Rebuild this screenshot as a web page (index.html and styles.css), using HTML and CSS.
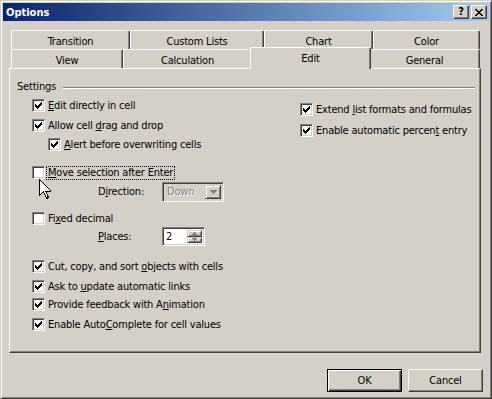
FILE: index.html
```html
<!DOCTYPE html>
<html>
<head>
<meta charset="utf-8">
<link rel="stylesheet" href="styles.css">
</head>
<body>
<div class="window">
  <div class="titlebar">
    <span class="title">Options</span>
    <div class="tbtns">
      <span class="tbtn help">?</span>
      <span class="tbtn close"><svg width="8" height="7" viewBox="0 0 8 7" shape-rendering="crispEdges"><path d="M0 0h2v1h1v1h2V1h1V0h2v1H7v1H6v1H5v1h1v1h1v1h1v1H6V6H5V5H3v1H2v1H0V6h1V5h1V4h1V3H2V2H1V1H0z" fill="#000"/></svg></span>
    </div>
  </div>
  <div class="body">
    <div class="tabs">
      <div class="tabrow">
        <div class="tab t-trans">Transition</div>
        <div class="tab t-custom">Custom Lists</div>
        <div class="tab t-chart">Chart</div>
        <div class="tab t-color">Color</div>
      </div>
      <div class="tabrow">
        <div class="tab t-view">View</div>
        <div class="tab t-calc">Calculation</div>
        <div class="tab t-edit selected">Edit</div>
        <div class="tab t-general">General</div>
      </div>
    </div>
    <div class="panel">
      <div class="section-head"><span class="section-title">Settings</span><span class="etch"></span></div>
      <div class="cols">
        <div class="left">
          <label class="row"><span class="cb checked"></span><span class="lbl"><u>E</u>dit directly in cell</span></label>
          <label class="row"><span class="cb checked"></span><span class="lbl">Allow cell <u>d</u>rag and drop</span></label>
          <label class="row indent"><span class="cb checked"></span><span class="lbl"><u>A</u>lert before overwriting cells</span></label>
          <label class="row"><span class="cb"></span><span class="lbl focus"><u>M</u>ove selection after Enter</span></label>
          <div class="row sub"><span class="sublbl">D<u>i</u>rection:</span>
            <span class="combo"><span class="combo-text">Down</span><span class="combo-btn"><svg width="7" height="4" viewBox="0 0 7 4" shape-rendering="crispEdges"><path d="M0 0h7v1H6v1H5v1H4v1H3V3H2V2H1V1H0z" fill="#808080"/></svg></span></span>
          </div>
          <label class="row"><span class="cb"></span><span class="lbl">Fi<u>x</u>ed decimal</span></label>
          <div class="row sub"><span class="sublbl"><u>P</u>laces:</span>
            <span class="spin"><span class="spin-text">2</span><span class="spin-btns"><span class="spin-btn"><svg width="5" height="3" viewBox="0 0 5 3" shape-rendering="crispEdges"><path d="M2 0h1v1h1v1h1v1H0V2h1V1h1z" fill="#808080"/></svg></span><span class="spin-btn"><svg width="5" height="3" viewBox="0 0 5 3" shape-rendering="crispEdges"><path d="M0 0h5v1H4v1H3v1H2V2H1V1H0z" fill="#808080"/></svg></span></span></span>
          </div>
          <label class="row"><span class="cb checked"></span><span class="lbl">Cut, copy, and sort <u>o</u>bjects with cells</span></label>
          <label class="row"><span class="cb checked"></span><span class="lbl">Ask to <u>u</u>pdate automatic links</span></label>
          <label class="row"><span class="cb checked"></span><span class="lbl">Provide feedback with A<u>n</u>imation</span></label>
          <label class="row"><span class="cb checked"></span><span class="lbl">Enable Auto<u>C</u>omplete for cell values</span></label>
        </div>
        <div class="right">
          <label class="row"><span class="cb checked"></span><span class="lbl">Extend <u>l</u>ist formats and formulas</span></label>
          <label class="row"><span class="cb checked"></span><span class="lbl">Enable automatic percen<u>t</u> entry</span></label>
        </div>
      </div>
    </div>
    <div class="buttons">
      <button class="btn default">OK</button>
      <button class="btn">Cancel</button>
    </div>
  </div>
  <svg class="cursor" width="12" height="20" viewBox="0 0 12 20" shape-rendering="crispEdges"><path d="M0.5 0.5v16l4-4 3 7 2-1-3-6.5h5.5z" fill="#fff" stroke="#000" stroke-width="1"/></svg>
</div>
</body>
</html>
```
FILE: styles.css
```css
* { box-sizing: border-box; }
html, body { margin: 0; padding: 0; background: #d4d0c8; }
body {
  font-family: "DejaVu Sans Condensed", "DejaVu Sans", "Liberation Sans", sans-serif;
  font-size: 11px;
  letter-spacing: -0.2px;
  color: #000;
}
.window {
  position: relative;
  width: 492px;
  height: 399px;
  background: #d4d0c8;
  border: 1px solid;
  border-color: #d4d0c8 #404040 #404040 #d4d0c8;
  box-shadow: inset 1px 1px #fff, inset -1px -1px #808080;
  padding: 2px;
}
.titlebar {
  height: 18px;
  background: linear-gradient(to right, #0a246a, #a6caf0);
  display: flex;
  align-items: center;
  justify-content: space-between;
  padding: 0 2px 0 3px;
}
.title {
  color: #fff;
  font-weight: bold;
  font-size: 11px;
  letter-spacing: 0;
}
.tbtns { display: flex; gap: 2px; }
.tbtn {
  width: 16px;
  height: 14px;
  background: #d4d0c8;
  border: 1px solid;
  border-color: #fff #404040 #404040 #fff;
  box-shadow: inset -1px -1px #808080;
  display: flex;
  align-items: center;
  justify-content: center;
  font-weight: bold;
  font-size: 11px;
  line-height: 1;
}
.help { padding-bottom: 1px; }
.body { padding: 9px 8px 0 6px; }
.tabs { margin-left: 2px; width: 469px; }
.tabrow { display: flex; height: 19px; }
.tab {
  height: 19px;
  border-top: 1px solid #fff;
  border-left: 1px solid #fff;
  border-right: 1px solid #404040;
  box-shadow: inset -1px 0 #808080;
  border-radius: 2px 2px 0 0;
  display: flex;
  align-items: center;
  justify-content: center;
  padding-top: 2px;
  background: #d4d0c8;
}
.t-trans { width: 119px; }
.t-custom { width: 134px; }
.t-chart { width: 109px; }
.t-color { width: 107px; }
.t-view { width: 112px; }
.t-calc { width: 129px; }
.t-edit { width: 117px; }
.t-general { width: 111px; }
.tab.selected {
  position: relative;
  z-index: 2;
  margin: -2px -2px 0;
  width: 121px;
  height: 22px;
  padding-top: 0;
  padding-bottom: 1px;
}
.panel {
  position: relative;
  z-index: 1;
  width: 472px;
  height: 285px;
  border: 1px solid;
  border-color: #fff #404040 #404040 #fff;
  box-shadow: inset -1px -1px #808080;
  padding: 11px 5px 0 7px;
}
.section-head {
  display: flex;
  align-items: center;
  height: 13px;
}
.section-title { padding-right: 7px; }
.etch {
  flex: 1;
  height: 2px;
  border-top: 1px solid #808080;
  border-bottom: 1px solid #fff;
  margin-top: 2px;
}
.cols {
  display: flex;
  margin-top: 3px;
  padding-left: 15px;
}
.left {
  width: 268px;
  display: grid;
  grid-template-rows: 20px 19px 28px 19px 27px 18px 30px 20px 18px 20px 19px;
  align-items: start;
}
.right {
  display: grid;
  grid-template-rows: 21px 19px;
  align-items: start;
  padding-top: 4px;
}
.row {
  display: flex;
  align-items: center;
  height: 19px;
  white-space: nowrap;
}
.row.indent { padding-left: 16px; }
.cb {
  width: 13px;
  height: 13px;
  flex: none;
  background: #fff;
  border: 1px solid;
  border-color: #808080 #fff #fff #808080;
  box-shadow: inset 1px 1px #404040, inset -1px -1px #d4d0c8;
  position: relative;
}
.cb.checked::after {
  content: "";
  position: absolute;
  left: 2px;
  top: 2px;
  width: 7px;
  height: 7px;
  background: url("data:image/svg+xml;utf8,<svg xmlns='http://www.w3.org/2000/svg' width='7' height='7' viewBox='0 0 7 7' shape-rendering='crispEdges'><path d='M6 0h1v3H6v1H5v1H4v1H3v1H2V6H1V5H0V2h1v1h1v1h1V3h1V2h1V1h1z' fill='black'/></svg>") no-repeat;
}
.lbl { margin-left: 3px; }
.lbl.focus {
  outline: 1px dotted #000;
  outline-offset: 0;
  padding: 0 1px;
  margin-left: 2px;
  line-height: 12px;
}
.sub { padding-left: 66px; }
.sublbl { width: 64px; }
.combo {
  width: 62px;
  height: 20px;
  display: flex;
  align-items: stretch;
  border: 1px solid;
  border-color: #808080 #fff #fff #808080;
  box-shadow: inset 1px 1px #404040, inset -1px -1px #d4d0c8;
  padding: 2px;
  background: #d4d0c8;
}
.combo-text {
  flex: 1;
  color: #808080;
  padding-left: 2px;
  display: flex;
  align-items: center;
  text-shadow: 1px 1px #fff;
}
.combo-btn {
  width: 16px;
  border: 1px solid;
  border-color: #d4d0c8 #404040 #404040 #d4d0c8;
  box-shadow: inset 1px 1px #fff, inset -1px -1px #808080;
  display: flex;
  align-items: center;
  justify-content: center;
}
.spin {
  width: 43px;
  height: 19px;
  display: flex;
  border: 1px solid;
  border-color: #808080 #fff #fff #808080;
  box-shadow: inset 1px 1px #404040, inset -1px -1px #d4d0c8;
  padding: 2px;
  background: #fff;
}
.spin-text {
  flex: 1;
  display: flex;
  align-items: center;
  padding-left: 1px;
}
.spin-btns {
  width: 15px;
  display: flex;
  flex-direction: column;
}
.spin-btn {
  flex: 1;
  background: #d4d0c8;
  border: 1px solid;
  border-color: #d4d0c8 #404040 #404040 #d4d0c8;
  box-shadow: inset 1px 1px #fff, inset -1px -1px #808080;
  display: flex;
  align-items: center;
  justify-content: center;
}
.buttons {
  display: flex;
  justify-content: flex-end;
  gap: 6px;
  margin-top: 16px;
  width: 474px;
}
.btn {
  width: 75px;
  height: 23px;
  font: inherit;
  letter-spacing: inherit;
  color: #000;
  background: #d4d0c8;
  border: 1px solid;
  border-color: #fff #404040 #404040 #fff;
  box-shadow: inset -1px -1px #808080;
  padding: 0;
}
.btn.default {
  border: 1px solid #000;
  box-shadow: inset 1px 1px #fff, inset -1px -1px #404040, inset -2px -2px #808080;
}
.cursor {
  position: absolute;
  left: 38px;
  top: 178px;
  z-index: 5;
}
```
